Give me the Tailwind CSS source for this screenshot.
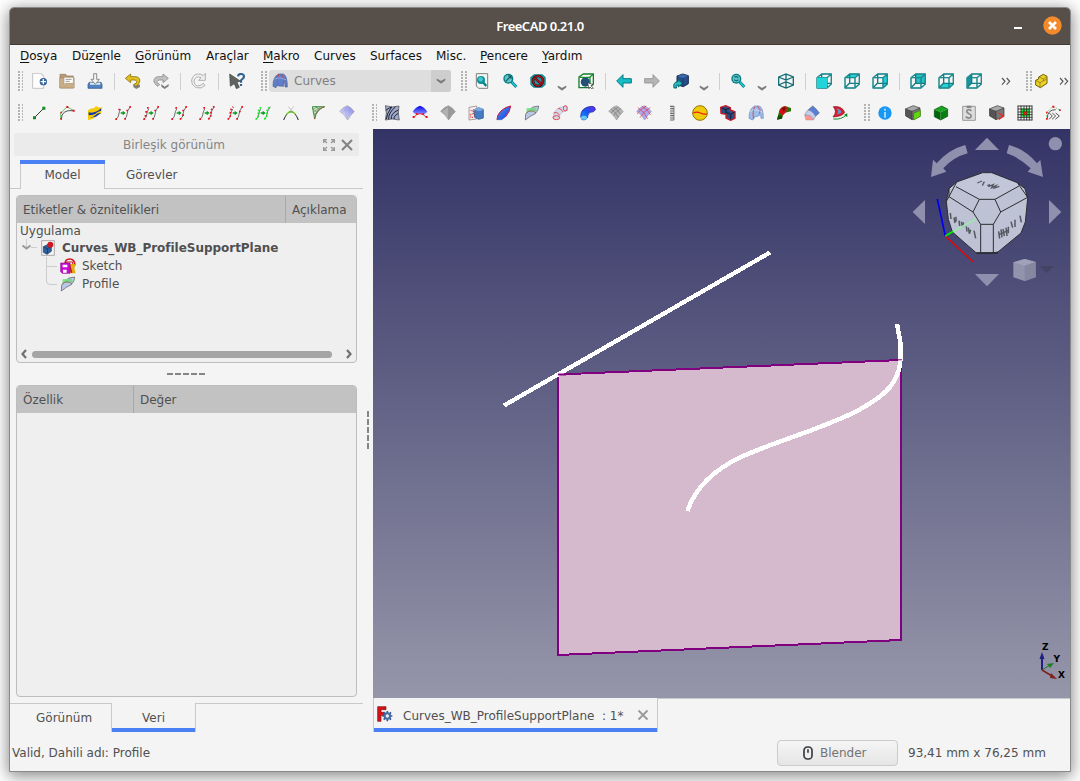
<!DOCTYPE html>
<html lang="tr">
<head>
<meta charset="utf-8">
<title>FreeCAD 0.21.0</title>
<script src="https://cdn.jsdelivr.net/npm/@tailwindcss/browser@4"></script>
</head>
<body class="w-[1080px] h-[781px] overflow-hidden bg-white pl-[10px] pt-2 text-[12px] text-[#505050] font-['DejaVu_Sans',sans-serif] whitespace-nowrap">
<svg width="0" height="0" class="absolute">
  <defs>
    <linearGradient id="sky" x1="0" y1="0" x2="0" y2="1"><stop offset="0" stop-color="#333366"/><stop offset="1" stop-color="#9696aa"/></linearGradient>
    <linearGradient id="bl" x1="0" y1="0" x2="1" y2="1"><stop offset="0" stop-color="#4f9af2"/><stop offset=".6" stop-color="#2a5fe8"/><stop offset="1" stop-color="#3a42e0"/></linearGradient>
    <linearGradient id="hose" x1="0" y1="1" x2="1" y2="0"><stop offset="0" stop-color="#1fa0ff"/><stop offset=".5" stop-color="#1556f0"/><stop offset="1" stop-color="#7a20f0"/></linearGradient>
    <linearGradient id="lav" x1="0" y1="1" x2="1" y2="0"><stop offset="0" stop-color="#f0f0ff"/><stop offset="1" stop-color="#7f82e8"/></linearGradient>
    <linearGradient id="fan" x1="0" y1="0" x2="0" y2="1"><stop offset="0" stop-color="#0000e8"/><stop offset=".5" stop-color="#6a70ff"/><stop offset="1" stop-color="#fff"/></linearGradient>
    <symbol id="chev" viewBox="0 0 30 18"><path d="M3 3v4l12 9 12-9V3l-12 7z" fill="#777" stroke="#777" stroke-width="2"/></symbol>
    <symbol id="strands" viewBox="0 0 48 48"><path d="M2 42Q10 40 11 30T17 12M28 42Q36 38 36 28T46 5" fill="none" stroke="#555" stroke-width="2.5"/><path d="M17 22h6v-5l9 7-9 7v-5h-6z" fill="#0a9a20"/></symbol>
    <symbol id="box" viewBox="0 0 48 48"><path d="M3 14L17 3H46V33L33 45H3zM3 14H33L46 3M33 14V45M17 3V29M17 30L3 44M17 31H46" fill="none" stroke="#157a80" stroke-width="4" stroke-linejoin="round"/><path d="M3 14L17 3H46V33L33 45H3zM3 14H33L46 3M33 14V45" fill="none" stroke="#2ba9ad" stroke-width="1.5"/></symbol>
    <symbol id="greybox" viewBox="0 0 48 48"><path d="M1 12L25 2 45 9 21 19z" fill="#aaa"/><path d="M1 12L21 19V44L2 33z" fill="#555"/><path d="M21 19L45 9V34L21 44z" fill="#777"/><path d="M1 12L25 2 45 9V34L21 44 2 33zM1 12L21 19 45 9M21 19V44" fill="none" stroke="#333" stroke-width="2"/></symbol>
    <symbol id="lens" viewBox="0 0 48 48"><path d="M29 27L43 42" stroke="#087c84" stroke-width="9"/><path d="M30 28L43 42" stroke="#20c4cc" stroke-width="5"/><circle cx="19" cy="17" r="15" fill="#087c84"/><circle cx="19" cy="17" r="11" fill="#5fc4c8"/></symbol>
    <symbol id="leaf" viewBox="0 0 48 48"><path d="M4 45L5 27 12 20 26 6 44 3 42 14 34 26 19 34z" fill="#b9c8ea" stroke="#555" stroke-width="2"/><path d="M8 10L36 8 38 20Q24 14 7 24z" fill="#6fdb83" opacity=".9"/><path d="M7 24Q20 12 36 23" fill="none" stroke="#9b583f" stroke-width="2.500"/></symbol>
  </defs>
</svg>

<div class="relative w-[1060px] h-[763px] rounded-t-[4px] bg-[#f4f4f4] flex flex-col outline outline-[#898989] shadow-[0_3px_16px_2px_rgba(0,0,0,0.48)]">
  <header class="h-[37px] shrink-0 rounded-t-[4px] bg-[#574f49] border-b border-[#403934] flex items-center relative">
    <div class="w-full text-center text-white font-semibold text-[13px] tracking-[-0.5px] font-['Noto_Sans',sans-serif] leading-none">FreeCAD 0.21.0</div>
    <div class="absolute right-[8px] top-[8px] flex items-center gap-[21px]">
      <span class="w-2 h-[2px] bg-white mt-[5px]"></span>
      <svg width="19" height="19" viewBox="0 0 19 19"><circle cx="9.500" cy="9.500" r="9.200" fill="#f38b2c"/><path d="M6 6l7 7M13 6l-7 7" stroke="#fff" stroke-width="2.600"/></svg>
    </div>
  </header>

  <nav class="h-[21px] shrink-0 flex items-center pl-[10px] gap-[15px] text-[#111] leading-none [&_u]:underline-offset-2">
    <span class="w-[37px]"><u>D</u>osya</span><span class="w-[48px]">Düz<u>e</u>nle</span><span class="w-[56px]"><u>G</u>örünüm</span><span class="w-[42px]">Araçlar</span><span class="w-[36px]"><u>M</u>akro</span><span class="w-[41px]">Curves</span><span class="w-[51px]">Surfaces</span><span class="w-[29px]">Misc.</span><span class="w-[48px]"><u>P</u>encere</span><span class="-ml-px"><u>Y</u>ardım</span>
  </nav>

  <!-- main toolbar -->
  <div class="h-[31px] shrink-0 flex items-center pl-[7px] pb-px [&_.i]:w-4 [&_.i]:h-4 [&_.i]:mx-[6px] [&>*]:shrink-0">
    <svg class="w-[6px] h-[20px] mr-[2px]" shape-rendering="crispEdges"><path d="M2 0V20M6 0V20" stroke="#b4b4b4" stroke-width="2" stroke-dasharray="2 1"/></svg>
    <svg class="i" viewBox="0 0 48 48"><path d="M5 1H31L38 8V46H5z" fill="#fdfdfd" stroke="#aaa" stroke-width="2"/><path d="M31 1V9H38" fill="#ddd"/><circle cx="37" cy="26" r="11" fill="#2f5f9c"/><path d="M37 18V34M29 26H45" stroke="#fff" stroke-width="4"/></svg>
    <svg class="i" viewBox="0 0 48 48"><path d="M3 4H20L24 9H43V45H3z" fill="#b79b76" stroke="#8f7757" stroke-width="2"/><path d="M2 15H46V45H2z" fill="#c9ad87" stroke="#8f7757"/><path d="M15 13H43V31H19L15 35z" fill="#fff" stroke="#a89577" stroke-width="2"/><path d="M20 19H38M20 25H32" stroke="#999" stroke-width="3"/></svg>
    <svg class="i" viewBox="0 0 48 48"><path d="M7 28H42L45 34V46H3V34z" fill="#4f83c4" stroke="#254a7d" stroke-width="2"/><path d="M9 29H40V35H9z" fill="#e8eef6"/><path d="M20 2H29V19H37L25 34 12 19H20z" fill="#f3f3f3" stroke="#777" stroke-width="2.500"/></svg>
    <span class="w-px h-[17px] bg-[#cfcfcf] mx-[4.500px]"></span>
    <svg class="i" viewBox="0 0 48 48"><path d="M25 33V42L34 48 45 42V35z" fill="#808080"/><path d="M1 16L17 3V11H32Q47 13 44 27Q41 36 32 40L27 34Q37 31 35 25Q34 21 28 21H17V29z" fill="#e2be1e" stroke="#8e7508" stroke-width="2.500"/></svg>
    <svg class="i" viewBox="0 0 48 48"><path d="M25 33L35 41 47 33V40L35 48 25 41z" fill="#808080"/><path d="M46 16L30 3V11H16Q1 13 3 27Q7 36 15 40L20 34Q10 31 12 25Q14 21 20 21H30V29z" fill="#c2c2c2" stroke="#8a8a8a" stroke-width="2.500"/></svg>
    <span class="w-px h-[17px] bg-[#cfcfcf] mx-[4.500px]"></span>
    <svg class="i" viewBox="0 0 48 48"><path d="M43 1V22H23L30 14Q13 7 9 24Q10 41 27 38L37 31 42 37Q31 49 17 44Q1 38 2 21Q6 3 22 3Q30 2 36 8z" fill="#efefef" stroke="#b0b0b0" stroke-width="3"/></svg>
    <span class="w-px h-[17px] bg-[#cfcfcf] mx-[4.500px]"></span>
    <svg class="i" viewBox="0 0 48 48"><path d="M27 10Q28 2 38 3Q47 5 44 14L36 22V29M36 33V39" fill="none" stroke="#32628f" stroke-width="6.500"/><path d="M2 3L34 24 24 28 31 43 22 47 16 32 4 40z" fill="#5f6461" stroke="#414543" stroke-width="2"/></svg>
    <svg class="w-[6px] h-[20px] ml-[10px] mr-[2px]" shape-rendering="crispEdges"><path d="M1 0V20M5 0V20" stroke="#b4b4b4" stroke-width="2" stroke-dasharray="2 1"/></svg>
    <div class="w-[182px] h-[22px] rounded-[3px] bg-[#dedede] flex items-center overflow-hidden text-[#808080]">
      <svg class="w-4 h-4 ml-[3px]" viewBox="0 0 48 48"><path d="M3 40Q3 10 20 3H34Q46 8 46 42H39Q40 30 34 24V40L14 38 12 44z" fill="#5e80cc" stroke="#425d93" stroke-width="2"/><path d="M20 4Q13 20 17 36M28 3L35 16 35 37" fill="none" stroke="#d64959" stroke-width="3"/><path d="M8 18Q22 10 42 20" fill="none" stroke="#b5cdf0" stroke-width="1.500"/></svg>
      <span class="ml-[6px] grow leading-none">Curves</span>
      <span class="w-5 h-full bg-[#cecece] flex items-center justify-center"><svg width="10" height="6"><use href="#chev"/></svg></span>
    </div>
    <svg class="w-[6px] h-[20px] ml-[10px] mr-[1px]" shape-rendering="crispEdges"><path d="M1 0V20M5 0V20" stroke="#b4b4b4" stroke-width="2" stroke-dasharray="2 1"/></svg>
    <svg class="i" viewBox="0 0 48 48"><path d="M7 2H41V46H14L7 39z" fill="#f5f5f5" stroke="#7b807d" stroke-width="3"/><path d="M27 28L37 39" stroke="#087c84" stroke-width="7"/><circle cx="21" cy="21" r="12" fill="#0c8f96"/><circle cx="20" cy="19" r="7" fill="#42c8ce"/></svg>
    <svg class="i" viewBox="0 0 48 48"><use href="#lens"/><path d="M11 25L26 10M18 9H27V17" fill="none" stroke="#0b565d" stroke-width="3.500"/></svg>
    <svg class="i" viewBox="0 0 48 48"><path d="M1 13L12 4H37L47 13V35L36 44H11L1 35z" fill="#11858c"/><path d="M5 15L14 8H37L43 15V34L35 40H12L5 35z" fill="#34bbc0"/><circle cx="24" cy="24" r="15" fill="#3b8f98" stroke="#111" stroke-width="8"/><circle cx="24" cy="24" r="15" fill="none" stroke="#b01722" stroke-width="4.500"/><path d="M13 14L35 34" stroke="#111" stroke-width="7"/><path d="M13 14L35 34" stroke="#b01722" stroke-width="4.500"/></svg>
    <svg class="w-[10px] h-[6px] mx-[5px] mt-[14px]"><use href="#chev"/></svg>
    <svg class="i" viewBox="0 0 48 48"><path d="M3 12L16 3H46V33L35 44H3z" fill="#fff" stroke="#157a2c" stroke-width="4"/><circle cx="22" cy="27" r="14" fill="#234f78"/><path d="M5 13H36V43M35 13L46 4" fill="none" stroke="#178a2d" stroke-width="4"/><path d="M29 29L46 35 39 38 46 46 42 48 36 42 33 47z" fill="#fff" stroke="#333" stroke-width="2"/></svg>
    <span class="w-px h-[17px] bg-[#cfcfcf] mx-[4.500px]"></span>
    <svg class="i" viewBox="0 0 48 48"><path d="M2 24L21 5V17H46V30H21V43z" fill="#13bdc3" stroke="#087b82" stroke-width="3"/></svg>
    <svg class="i" viewBox="0 0 48 48"><path d="M46 24L27 5V17H2V30H27V43z" fill="#b5b5b5" stroke="#999" stroke-width="3"/></svg>
    <svg class="i !ml-[7px] !mr-[5px]" viewBox="0 0 48 48"><path d="M12 9L29 3 46 8V32L31 41 12 35z" fill="#274e88" stroke="#152c50" stroke-width="3"/><path d="M13 9L30 15 45 8 29 4z" fill="#3b6bad"/><path d="M30 15V39" stroke="#152c50" stroke-width="2"/><path d="M3 45Q-1 27 15 26V20L28 31 16 42V36Q7 36 11 45z" fill="#20bdc3" stroke="#08646b" stroke-width="3"/></svg>
    <svg class="w-[10px] h-[6px] mx-[5px] mt-[14px]"><use href="#chev"/></svg>
    <span class="w-px h-[17px] bg-[#cfcfcf] mx-[4.500px]"></span>
    <svg class="i" viewBox="0 0 48 48"><use href="#lens"/><path d="M13 13Q19 8 25 14M25 20Q19 27 13 20" fill="none" stroke="#0b6b73" stroke-width="4"/></svg>
    <svg class="w-[10px] h-[6px] mx-[5px] mt-[14px]"><use href="#chev"/></svg>
    <svg class="i" viewBox="0 0 48 48"><path d="M2 12L24 3 46 12V36L24 45 2 36zM2 12L24 21 46 12M24 3V45M2 36L24 26 46 36" fill="none" stroke="#136d72" stroke-width="4"/></svg>
    <span class="w-px h-[17px] bg-[#cfcfcf] mx-[4.500px]"></span>
    <svg class="i" viewBox="0 0 48 48"><use href="#box"/><path d="M3 14H33V45H3z" fill="#20d4da"/></svg>
    <svg class="i" viewBox="0 0 48 48"><path d="M5 13L17 4H44L32 13z" fill="#20d4da"/><use href="#box"/></svg>
    <svg class="i" viewBox="0 0 48 48"><path d="M33 14L45 5V32L33 44z" fill="#20d4da"/><use href="#box"/></svg>
    <span class="w-px h-[17px] bg-[#cfcfcf] mx-[4.500px]"></span>
    <svg class="i" viewBox="0 0 48 48"><path d="M17 4H45V31H17z" fill="#25bfc4"/><use href="#box"/></svg>
    <svg class="i" viewBox="0 0 48 48"><path d="M17 31H45L33 44H4z" fill="#20d4da"/><use href="#box"/></svg>
    <svg class="i" viewBox="0 0 48 48"><path d="M3 14L17 4V31L4 44z" fill="#16969d"/><use href="#box"/></svg>
    <svg class="w-[10px] h-[9px] ml-[13px] mr-[15px]" viewBox="0 0 30 27"><path d="M3 3l9 10-9 10M17 3l9 10-9 10" fill="none" stroke="#555" stroke-width="3.500"/></svg>
    <svg class="w-[6px] h-[20px]" shape-rendering="crispEdges"><path d="M1 0V20M5 0V20" stroke="#b4b4b4" stroke-width="2" stroke-dasharray="2 1"/></svg>
    <svg class="w-4 h-4 ml-px" viewBox="0 0 48 48"><path d="M8 22L17 18V12L31 4 42 10V31L22 44 8 36z" fill="#ecd22a" stroke="#6e5e04" stroke-width="3"/><path d="M8 22L21 29 41 18M18 12L31 18 41 11M21 29V43M31 18V24" fill="none" stroke="#806d08" stroke-width="2"/></svg>
    <svg class="w-[10px] h-[9px] ml-[10px]" viewBox="0 0 30 27"><path d="M3 3l9 10-9 10M17 3l9 10-9 10" fill="none" stroke="#555" stroke-width="3.500"/></svg>
  </div>

  <!-- curves and surfaces toolbars -->
  <div class="h-[32px] shrink-0 flex items-center pl-[7px] [&_.i]:w-4 [&_.i]:h-4 [&_.i]:mx-[6px] [&>*]:shrink-0">
    <svg class="w-[6px] h-[18px] mr-[2px]" shape-rendering="crispEdges"><path d="M2 0V18M6 0V18" stroke="#b4b4b4" stroke-width="2" stroke-dasharray="2 1"/></svg>
    <svg class="i" viewBox="0 0 48 48"><path d="M10 38L38 10" stroke="#333" stroke-width="3"/><path d="M6 34h9v9H6zM34 5h9v9h-9z" fill="#138a20"/></svg>
    <svg class="i" viewBox="0 0 48 48"><path d="M5 43V25L24 5 44 17" fill="none" stroke="#20a030" stroke-width="2"/><path d="M7 43Q7 13 43 17" fill="none" stroke="#555" stroke-width="3"/><path d="M4 39h5v5H4zM4 20h5v5H4zM22 3h6v6H22zM41 14h6v6H41z" fill="#f20d18"/></svg>
    <svg class="i" viewBox="0 0 48 48"><path d="M3 16L14 10Q22 12 27 3 34 9 46 7L42 26Q34 26 25 36 14 46 3 45z" fill="#f6cb05"/><path d="M5 22Q24 27 42 10V17Q28 21 25 27 15 31 5 31zM8 38Q20 36 25 31 33 22 42 24L27 35z" fill="#1438ad"/></svg>
    <svg class="i" viewBox="0 0 48 48"><use href="#strands"/><path d="M1 40h5v5H1zM10 11h5v5h-5zM28 39h5v5h-5zM34 14h5v5h-5zM43 3h5v5h-5z" fill="#f20d18"/></svg>
    <svg class="i" viewBox="0 0 48 48"><use href="#strands"/><path d="M1 40h5v5H1zM5 30h5v5H5zM7 18h5v5H7zM12 6h5v5h-5zM28 39h5v5h-5zM34 14h5v5h-5zM43 3h5v5h-5z" fill="#f20d18"/></svg>
    <svg class="i" viewBox="0 0 48 48"><use href="#strands"/><path d="M1 40h5v5H1zM13 6h5v5h-5zM26 39h5v5h-5zM34 28h5v5h-5zM34 14h5v5h-5zM43 3h5v5h-5z" fill="#f20d18"/></svg>
    <svg class="i" viewBox="0 0 48 48"><use href="#strands"/><path d="M1 40h5v5H1zM13 6h5v5h-5z" fill="#f20d18"/><path d="M28 43Q38 34 36 24T46 4" fill="none" stroke="#f20d18" stroke-width="5" stroke-dasharray="5 5"/></svg>
    <svg class="i" viewBox="0 0 48 48"><use href="#strands"/><path d="M2 43Q11 38 10 26T19 6" fill="none" stroke="#f20d18" stroke-width="5" stroke-dasharray="5 5"/><path d="M28 39h5v5h-5zM36 17h5v5h-5zM43 3h5v5h-5z" fill="#f20d18"/></svg>
    <svg class="i" viewBox="0 0 48 48"><use href="#strands"/><path d="M2 43Q11 38 10 26T19 6M28 43Q38 34 36 24T46 4" fill="none" stroke="#10ed25" stroke-width="5" stroke-dasharray="5 4"/></svg>
    <svg class="i" viewBox="0 0 48 48"><path d="M15 4L33 24M33 4L15 24" stroke="#aaa" stroke-width="2"/><path d="M2 45Q12 20 24 20T46 45" fill="none" stroke="#222" stroke-width="3"/><path d="M10 28Q24 12 38 28" fill="none" stroke="#69d818" stroke-width="4"/></svg>
    <svg class="i" viewBox="0 0 48 48"><path d="M4 5H41Q17 12 11 42z" fill="#d3e6cf" stroke="#28812f" stroke-width="2.500"/><path d="M6 12L21 5M7 21L28 6M9 30L34 7M13 5L26 13M4 11L19 23M6 22L14 31" stroke="#28812f" stroke-width="1.500"/><path d="M41 6Q12 9 11 43" fill="none" stroke="#b45441" stroke-width="2"/></svg>
    <svg class="i" viewBox="0 0 48 48"><path d="M2 19Q12 6 25 2 39 8 46 20 36 28 26 45 14 26 2 19z" fill="url(#lav)" stroke="#999" stroke-width="1.500"/><path d="M24 42L18 8M24 42L34 8M8 24Q25 6 40 24" fill="none" stroke="#9999cc" stroke-width="1"/></svg>
    <svg class="w-[6px] h-[18px] ml-[10px] mr-[1px]" shape-rendering="crispEdges"><path d="M2 0V18M6 0V18" stroke="#b4b4b4" stroke-width="2" stroke-dasharray="2 1"/></svg>
    <svg class="i" viewBox="0 0 48 48"><path d="M4 2Q24 9 45 3L43 24 46 45Q24 39 4 45L7 24z" fill="#9ea6ca" stroke="#444" stroke-width="2"/><path d="M5 16Q18 7 23 6 8 26 7 42M14 43Q12 24 35 5M22 42Q19 26 43 15M31 42Q27 34 43 25" fill="none" stroke="#1e2430" stroke-width="3"/></svg>
    <svg class="i" viewBox="0 0 48 48"><path d="M2 20Q10 6 24 2 38 6 46 20L38 28 24 42 10 28z" fill="url(#fan)"/><path d="M5 37Q24 15 43 37L24 46z" fill="#f4f4f4"/><path d="M5 37Q24 15 43 37" fill="none" stroke="#f01218" stroke-width="2.500"/><path d="M2 33h6v6H2zM12 24h5v5h-5zM31 24h5v5h-5zM41 33h6v6h-6z" fill="#f01218"/></svg>
    <svg class="i" viewBox="0 0 48 48"><path d="M2 19Q12 6 25 2 39 8 46 20 36 28 26 45 14 26 2 19z" fill="#999" stroke="#888" stroke-width="1.500"/><path d="M24 41Q16 26 6 19L24 7z" fill="#bbb" opacity=".7"/></svg>
    <svg class="i" viewBox="0 0 48 48"><path d="M3 7L26 3V42L3 45z" fill="#eee" stroke="#8f7171" stroke-width="2"/><path d="M8 17h8v10H8v10h8M17 13v9M19 22v15" fill="none" stroke="#d22" stroke-width="3" stroke-dasharray="3 2"/><path d="M20 14L32 8 46 13V39L32 43 20 37z" fill="#477cc1" stroke="#234c85" stroke-width="2"/><ellipse cx="33" cy="13" rx="12" ry="5" fill="#79a7de"/></svg>
    <svg class="i" viewBox="0 0 48 48"><path d="M3 44Q3 30 14 19 27 6 44 3 42 20 28 36L17 44z" fill="url(#bl)" stroke="#3656b3" stroke-width="1.500"/><path d="M3 44Q3 30 14 19 27 6 44 3Q42 20 28 36" fill="none" stroke="#d71b3c" stroke-width="3"/></svg>
    <svg class="i" viewBox="0 0 48 48"><use href="#leaf"/></svg>
    <svg class="i" viewBox="0 0 48 48"><path d="M3 39Q4 5 42 4L46 17Q22 20 22 40z" fill="#d4def0" stroke="#999"/><g fill="none" stroke="#e62735" stroke-width="2.500"><ellipse cx="13" cy="38" rx="10" ry="6"/><path d="M5 24Q14 18 23 30M18 10Q28 10 32 20"/><ellipse cx="40" cy="10" rx="6" ry="8"/></g></svg>
    <svg class="i" viewBox="0 0 48 48"><path d="M2 35Q2 6 36 4 47 5 46 15 41 22 31 22 23 25 22 39 16 47 6 44z" fill="url(#hose)" stroke="#2635a0" stroke-width="2.500"/><ellipse cx="12" cy="38" rx="9" ry="6" fill="#62c7f5"/></svg>
    <svg class="i" viewBox="0 0 48 48"><path d="M2 19Q12 6 25 2 39 8 46 20 36 28 26 45 14 26 2 19z" fill="#b5b5b5" stroke="#888" stroke-width="1.500"/><path d="M10 13Q24 22 31 37M17 7Q32 16 37 27M39 11Q24 18 17 32M32 6Q18 12 9 24" fill="none" stroke="#777" stroke-width="2"/></svg>
    <svg class="i" viewBox="0 0 48 48"><path d="M2 19Q12 6 25 2 39 8 46 20 36 28 26 45 14 26 2 19z" fill="#aaa8f3" stroke="#888" stroke-width="1.500"/><path d="M5 8Q26 20 35 42M17 3Q34 12 44 30M43 8Q22 18 12 38M31 3Q14 11 3 27" fill="none" stroke="#e53442" stroke-width="2"/></svg>
    <svg class="i" viewBox="0 0 48 48"><path d="M18 4h12M18 11h12M18 18h12M18 25h12M18 32h12M18 39h12M18 45h12" stroke="#666" stroke-width="3.500"/><path d="M30 4L18 11M30 11L18 18M30 18L18 25M30 25L18 32M30 32L18 39" stroke="#aaa" stroke-width="1.500"/><path d="M30 3V45" stroke="#555" stroke-width="2"/></svg>
    <svg class="i" viewBox="0 0 48 48"><circle cx="24" cy="24" r="22" fill="#f1ca0b" stroke="#8e7505" stroke-width="3"/><path d="M4 24Q14 19 25 24T44 27" fill="none" stroke="#e82112" stroke-width="4"/></svg>
    <svg class="i" viewBox="0 0 48 48"><path d="M2 7L17 2 31 8V15L45 20V40L32 46 18 39V28L3 25z" fill="#294d80" stroke="#cc1b28" stroke-width="4"/><path d="M4 9L18 14 29 9M18 14V27M19 22L32 28 44 21M32 28V44" fill="none" stroke="#141e30" stroke-width="3"/></svg>
    <svg class="i" viewBox="0 0 48 48"><path d="M3 40Q3 10 20 3H34Q46 8 46 40H39Q40 30 34 24V32L20 36 14 45z" fill="#9dbdea" stroke="#688bc3" stroke-width="2"/><path d="M21 5Q12 20 17 42M28 3L36 14 35 24" fill="none" stroke="#d64959" stroke-width="3"/><path d="M6 20Q20 8 44 22" fill="none" stroke="#eaf1ff" stroke-width="1.500"/></svg>
    <svg class="i" viewBox="0 0 48 48"><path d="M3 44L8 24Q12 5 27 3L45 9V19L27 23Q20 28 18 40z" fill="#28720c"/><path d="M9 20Q15 5 27 4L33 7 31 20 19 32z" fill="#d41212"/><path d="M17 10L29 7 24 20z" fill="#780808"/><path d="M3 44L7 30 19 34 18 41z" fill="#134b04"/></svg>
    <svg class="i" viewBox="0 0 48 48"><path d="M13 14L26 3Q36 10 46 24L34 34z" fill="#5a7fd7" stroke="#596274" stroke-width="2"/><path d="M2 30L18 28 28 45H6z" fill="#ff9793" stroke="#aa6663"/><path d="M10 16Q24 15 34 34L29 44Q22 28 2 30z" fill="#c3cfef" stroke="#8d94a7" stroke-width="2"/></svg>
    <svg class="i" viewBox="0 0 48 48"><path d="M4 5Q30 2 38 22 33 34 3 36 17 20 4 5z" fill="#dd1a2c" stroke="#801018" stroke-width="2"/><path d="M12 10Q25 12 29 22 24 28 14 29 23 19 12 10z" fill="#6892cd"/><path d="M4 42Q28 45 44 29" fill="none" stroke="#11892a" stroke-width="3"/><path d="M36 29l10-4v12z" fill="#11892a"/></svg>
    <svg class="w-[6px] h-[18px] ml-[10px] mr-[1px]" shape-rendering="crispEdges"><path d="M1 0V18M5 0V18" stroke="#b4b4b4" stroke-width="2" stroke-dasharray="2 1"/></svg>
    <svg class="i" viewBox="0 0 48 48"><circle cx="24" cy="24" r="20" fill="#1798f5"/><path d="M24 11v6M24 21v17" stroke="#c0e2fc" stroke-width="5"/></svg>
    <svg class="i" viewBox="0 0 48 48"><use href="#greybox"/><path d="M26 25L46 16V34L26 45z" fill="#63d80e" stroke="#347b05" stroke-width="2"/></svg>
    <svg class="i" viewBox="0 0 48 48"><path d="M4 14L26 3 44 12 23 22z" fill="#18a51e"/><path d="M4 14L23 22V45L4 35z" fill="#05630b"/><path d="M23 22L44 12V34L23 45z" fill="#087e10"/><path d="M4 14L26 3 44 12V34L23 45 4 35z" fill="none" stroke="#034c08" stroke-width="2"/></svg>
    <svg class="i" viewBox="0 0 48 48"><path d="M5 4H43V46H5z" fill="#ddd" stroke="#9a9a9a" stroke-width="3"/><path d="M17 2h14v7H17z" fill="#888"/><path d="M31 18Q27 12 19 15 14 21 24 26 34 30 29 37 22 42 14 35" fill="none" stroke="#888" stroke-width="5"/></svg>
    <svg class="i" viewBox="0 0 48 48"><use href="#greybox"/><path d="M29 24L43 34 29 43" fill="none" stroke="#f12720" stroke-width="4"/></svg>
    <svg class="i" viewBox="0 0 48 48"><path d="M12 11H36V35H12z" fill="#15ed24"/><path d="M2 3H46M2 12H46M2 21H46M2 29H46M2 37H46M2 45H46M3 2V46M12 2V46M21 2V46M29 2V46M37 2V46M45 2V46" stroke="#222" stroke-width="2.500"/><path d="M20 20h9v9h-9z" fill="#e01818"/></svg>
    <svg class="i" viewBox="0 0 48 48"><path d="M5 43V22L24 4 44 15" fill="none" stroke="#45b052" stroke-width="2" stroke-dasharray="5 3"/><path d="M7 40Q7 14 32 14M13 24L22 33 12 43M22 24L32 33 21 43M32 24L43 33 31 43" fill="none" stroke="#555" stroke-width="3"/><path d="M3 39h5v5H3zM3 20h5v5H3zM22 2h6v6H22zM42 13h5v5H42z" fill="#f20d18"/></svg>
  </div>

  <main class="h-[603px] shrink-0 flex">
    <aside class="w-[363px] shrink-0 flex flex-col relative">
      <div class="h-[23px] mt-1 ml-1 w-[345px] rounded-[2px] bg-[#ebebeb] flex items-center text-[#858585]">
        <span class="w-[309px] pl-[11px] text-center leading-none">Birleşik görünüm</span>
        <svg width="12" height="12" viewBox="0 0 36 36"><path d="M2 12V2H12M2 2L12 12M24 2H34V12M34 2L24 12M2 24V34H12M2 34L12 24M24 34H34V24M34 34L24 24" fill="none" stroke="#999" stroke-width="4"/></svg>
        <svg class="ml-[6px]" width="12" height="12" viewBox="0 0 12 12"><path d="M1 1l10 10M11 1L1 11" stroke="#858585" stroke-width="2.200"/></svg>
      </div>
      <div class="h-[29px] mt-1 flex w-[353px] leading-none">
        <div class="w-[10px] border-b border-[#c9c9c9]"></div>
        <div class="w-[85px] border-x border-[#c9c9c9] relative flex items-center justify-center"><span class="absolute -inset-x-px top-0 h-1 bg-[#4a80f4]"></span>Model</div>
        <div class="grow border-b border-[#c9c9c9] flex items-center pl-[21px] pt-px">Görevler</div>
      </div>
      <section class="mt-[6px] ml-[6px] w-[341px] h-[168px] border border-[#bdbdbd] rounded-[4px] bg-[#efefef] overflow-hidden flex flex-col leading-none">
        <div class="h-[27px] shrink-0 bg-[#c2c2c2] flex items-center"><span class="w-[269px] h-full pl-[6px] border-r border-[#a9a9a9] flex items-center">Etiketler &amp; öznitelikleri</span><span class="pl-[6px]">Açıklama</span></div>
        <div class="h-[16px] flex items-center pl-[3px]">Uygulama</div>
        <div class="h-[18px] flex items-center">
          <svg class="w-6 h-[18px]" viewBox="0 0 24 18"><path d="M9.500 0V8M14 8.500H20" stroke="#ccc"/><path d="M5.500 6.500l4 3 4-3" fill="none" stroke="#999" stroke-width="2"/></svg>
          <svg class="w-[14px] h-4" viewBox="0 0 42 48"><path d="M2 2H40V46H2z" fill="#f5f5f5" stroke="#888" stroke-width="2"/><path d="M7 20L19 14 31 19V34L18 43 7 37z" fill="#2d609e" stroke="#173358" stroke-width="2"/><path d="M8 21L19 26 30 19M19 26V42" fill="none" stroke="#152d4d" stroke-width="2"/><circle cx="28" cy="14" r="9" fill="#cf1820"/></svg>
          <b class="ml-[7px] tracking-[-0.030px]">Curves_WB_ProfileSupportPlane</b>
        </div>
        <div class="h-[18px] flex items-center">
          <svg class="w-[43px] h-[18px]" viewBox="0 0 43 18"><path d="M29.500 0V18M30 9.500H40" stroke="#ccc"/></svg>
          <svg class="w-4 h-4" viewBox="0 0 48 48"><path d="M15 22Q14 3 29 3T45 22" fill="none" stroke="#cf1720" stroke-width="5"/><path d="M20 12H38V24H20z" fill="none" stroke="#cf1720" stroke-width="3"/><path d="M29 18H47L43 31 47 46H31z" fill="#e5ab0b"/><path d="M27 17L35 44" stroke="#c81921" stroke-width="5"/><path d="M2 15H30V46H7L2 41z" fill="#cb09d3" stroke="#86138d" stroke-width="2"/><path d="M8 20H22V28H8zM9 35H20V44H9z" fill="#fff"/></svg>
          <span class="ml-[6px]">Sketch</span>
        </div>
        <div class="h-[18px] flex items-center">
          <svg class="w-[43px] h-[18px]" viewBox="0 0 43 18"><path d="M29.500 0V6Q29.500 9.500 33 9.500H40" fill="none" stroke="#ccc"/></svg>
          <svg class="w-4 h-4"><use href="#leaf"/></svg>
          <span class="ml-[6px]">Profile</span>
        </div>
        <div class="mt-auto mb-[3px] h-[10px] flex items-center">
          <svg class="w-[6px] h-[10px] ml-1" viewBox="0 0 6 10"><path d="M5 1L1.500 5l3.500 4" fill="none" stroke="#707070" stroke-width="2.200"/></svg>
          <span class="w-[300px] h-[7px] ml-[5px] rounded-full bg-[#a5a5a5]"></span>
          <svg class="w-[6px] h-[10px] ml-[14px]" viewBox="0 0 6 10"><path d="M1 1l3.500 4-3.500 4" fill="none" stroke="#707070" stroke-width="2.200"/></svg>
        </div>
      </section>
      <svg class="mt-[10px] ml-[157px] w-[38px] h-[2px] shrink-0"><path d="M0 1H38" stroke="#858585" stroke-width="2" stroke-dasharray="6 2"/></svg>
      <section class="mt-[10px] ml-[6px] w-[341px] h-[312px] border border-[#bdbdbd] rounded-[4px] bg-[#efefef] overflow-hidden leading-none">
        <div class="h-[27px] bg-[#c2c2c2] flex items-center"><span class="w-[117px] h-full pl-[6px] border-r border-[#a9a9a9] flex items-center">Özellik</span><span class="pl-[6px]">Değer</span></div>
      </section>
      <div class="mt-[6px] h-[29px] w-[353px] flex leading-none">
        <div class="w-[101px] border-t border-[#c9c9c9] flex items-center pl-[26px]">Görünüm</div>
        <div class="w-[85px] border-x border-[#c9c9c9] relative flex items-center justify-center"><span class="absolute inset-x-0 bottom-0 h-1 bg-[#4a80f4]"></span>Veri</div>
        <div class="grow border-t border-[#c9c9c9]"></div>
      </div>
      <svg class="absolute left-[357px] top-[282px] w-[2px] h-[38px]"><path d="M1 0V38" stroke="#858585" stroke-width="2" stroke-dasharray="6 2"/></svg>
    </aside>

    <section class="w-[697px] flex flex-col">
      <svg class="block shrink-0" width="697" height="569" viewBox="373 129 697 569">
        <path d="M373 129H1070V698H373z" fill="url(#sky)"/>
        <path d="M558 374.500L901 360V640L558 655z" fill="#d5b9cd" stroke="#800080" stroke-width="2" shape-rendering="crispEdges"/>
        <path d="M504 405.500L770 252.500" stroke="#fff" stroke-width="4.300" shape-rendering="crispEdges"/>
        <path d="M558 374.500H566" stroke="#800080" stroke-width="2"/>
        <path d="M897 324L900.500 343V358C900 377 889 391 875 400C857 413 835 421 812 430C785 440 760 448 739 458C716 469 695 487 687.500 511" fill="none" stroke="#fff" stroke-width="4.500" shape-rendering="crispEdges"/>
        <path d="M886 360.500L902 359.700" stroke="#800080" stroke-width="1"/>
        <!-- navigation cube -->
        <g transform="translate(900 125) scale(.33333)">
          <g fill="#8f90ae">
            <path d="M225 75L261 38 297 75zM225 447H297L261 484zM75 225V297L38 261zM447 225L484 261 447 297z"/>
            <circle cx="466" cy="56" r="20"/>
            <path d="M196 60L203 85Q159 97 130 130L139 140 93 156 99 104 110 115Q146 73 196 60zM327 60L320 85Q361 99 392 130L383 140 429 156 421 105 411 115Q374 72 327 60z"/>
          </g>
          <path d="M340 412L374 402 407 411V457L374 468 340 457z" fill="#9293ad"/><path d="M340 412L374 422 407 411 374 402z" fill="#a1a2b9"/><path d="M374 422L407 411V457L374 468z" fill="#85869f"/>
          <path d="M420 423H462L441 444z" fill="#434363"/>
          <path d="M248 143H275L352 173 375 191 383 220 376 291 363 324 294 381 278 384H229L157 321 145 283 139 229 147 191 170 171z" fill="#bdc2d4"/>
          <path d="M248 143H275L352 173 358 183 285 223H238L168 185 170 171z" fill="#c1c6d8"/>
          <path d="M248 143H275L352 173 375 191 383 220 376 291 363 324 294 381 278 384H229L157 321 145 283 139 229 147 191 170 171zM168 185L238 223H285L357 183M170 171L147 215 219 261 238 223M147 215L139 229M285 223L302 261 383 217 352 173M219 261L242 298H280L302 261M242 298V384M280 298V384M147 191V215" fill="none" stroke="#292d30" stroke-width="3" stroke-linejoin="round"/>
          <path d="M229 384H294" stroke="#292d30" stroke-width="5"/>
          <path d="M232 174L246 168M247 182L253 170M265 185L280 179 275 188 288 182 283 189 298 184M262 182L270 179" fill="none" stroke="#555a64" stroke-width="4"/>
          <path d="M151 264L153 282M162 277L165 294M168 275V290M177 287L179 303M184 290L187 306M190 292V306M199 304L201 320M205 308L208 326 212 314M222 317L227 340" fill="none" stroke="#535861" stroke-width="4.500"/>
          <path d="M296 319L299 341M303 313L306 337M309 312L313 333M318 308L321 333M325 305V325M297 329L325 316M333 290L338 308M345 284V306M360 272L364 292" fill="none" stroke="#535861" stroke-width="4.500"/>
          <path d="M112 222L136 333" stroke="#0000f0" stroke-width="5"/><path d="M136 333L219 410" stroke="#f00000" stroke-width="4"/><path d="M136 333L160 319" stroke="#00ec00" stroke-width="5"/><path d="M160 319L229 281" stroke="#a0e5ad" stroke-width="5"/>
        </g>
        <!-- axis cross -->
        <g font-family="DejaVu Sans, sans-serif" font-size="9" font-weight="bold" fill="#000"><text x="1042" y="650">Z</text><text x="1053.500" y="662">Y</text><text x="1058" y="678">X</text></g>
        <path d="M1042 670V656" stroke="#202080" stroke-width="2"/><path d="M1039.500 659L1042 652 1044.500 659z" fill="#202080"/>
        <path d="M1042 670L1050 665" stroke="#208020"/><path d="M1047 664L1054 663 1050 668z" fill="#208020"/>
        <path d="M1042 670L1052 676" stroke="#802020" stroke-width="1.500"/><path d="M1051 673L1057 679 1050 678z" fill="#802020"/>
      </svg>
      <div class="h-[34px] flex leading-none">
        <div class="w-[285px] border-x border-[#c9c9c9] relative flex items-center pl-[3px]">
          <span class="absolute inset-x-0 bottom-0 h-1 bg-[#4a80f4]"></span>
          <svg class="w-4 h-4 mb-[2px]" viewBox="0 0 48 48"><path d="M2 2H27V11H12V19H23V28H12V46H2z" fill="#dc1015" stroke="#721114" stroke-width="2"/><path d="M31 15V46M16 30H46M20 19L42 41M42 19L20 41" stroke="#345789" stroke-width="5"/><circle cx="31" cy="30" r="11" fill="#416da8"/><circle cx="31" cy="30" r="5" fill="#eee"/></svg>
          <span class="ml-[10px] w-[190px] pt-px">Curves_WB_ProfileSupportPlane</span><span class="ml-[9px] pt-px">: 1*</span>
          <svg class="ml-auto mr-[8px]" width="12" height="12" viewBox="0 0 12 12"><path d="M1.500 1.500l9 9M10.500 1.500l-9 9" stroke="#999" stroke-width="1.800"/></svg>
        </div>
        <div class="grow border-t border-[#c9c9c9]"></div>
      </div>
    </section>
  </main>

  <footer class="grow flex items-center pl-[2px] pr-[25px] pt-[2px] leading-none">
    <span class="grow">Valid, Dahili adı: Profile</span>
    <div class="w-[121px] h-[26px] rounded-[4px] border border-[#cbcbcb] bg-linear-to-b from-[#f5f5f5] to-[#e5e5e5] flex items-center pl-[25px] text-[#737373]">
      <svg width="10" height="14" viewBox="0 0 30 42"><rect x="3" y="3" width="24" height="36" rx="10" fill="#eee" stroke="#383c40" stroke-width="5"/><path d="M15 10v10" stroke="#383c40" stroke-width="5"/></svg>
      <span class="ml-[7px]">Blender</span>
    </div>
    <span class="ml-[10px] w-[137px]">93,41 mm x 76,25 mm</span>
  </footer>
</div>
</body>
</html>
